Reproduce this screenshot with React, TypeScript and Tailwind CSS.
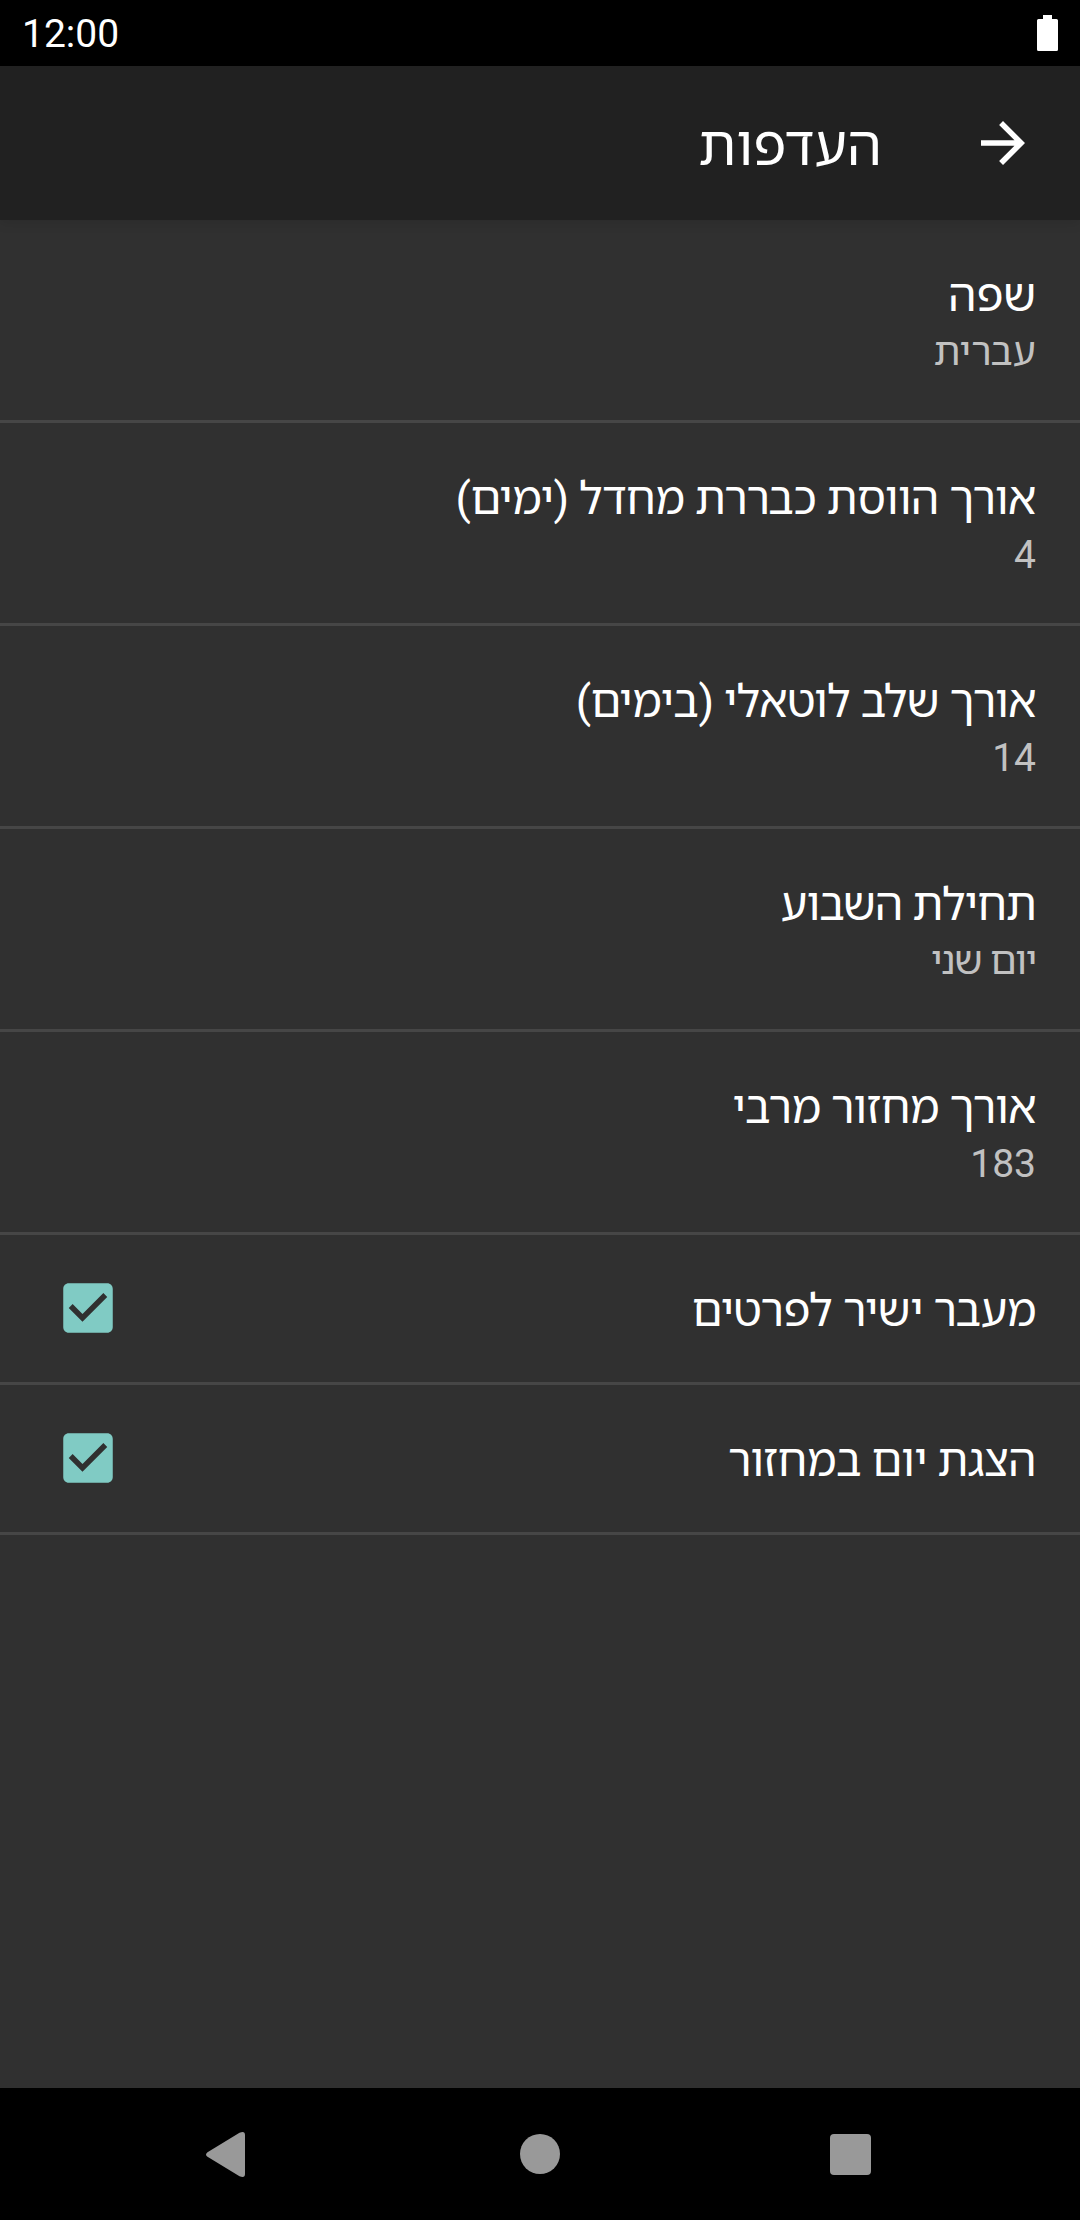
const rows = [
  { title: 'שפה', summary: 'עברית', titleTracking: 'tracking-normal', summaryTracking: 'tracking-normal' },
  { title: 'אורך הווסת כבררת מחדל (ימים)', summary: '4', titleTracking: 'tracking-[-0.55px]', summaryTracking: 'tracking-normal' },
  { title: 'אורך שלב לוטאלי (בימים)', summary: '14', titleTracking: 'tracking-[-0.62px]', summaryTracking: 'tracking-normal' },
  { title: 'תחילת השבוע', summary: 'יום שני', titleTracking: 'tracking-[-0.9px]', summaryTracking: 'tracking-[-1.2px]' },
  { title: 'אורך מחזור מרבי', summary: '183', titleTracking: 'tracking-[-0.6px]', summaryTracking: 'tracking-normal' },
];

const toggles = [
  { title: 'מעבר ישיר לפרטים', tracking: 'tracking-[-0.52px]' },
  { title: 'הצגת יום במחזור', tracking: 'tracking-[-0.6px]' },
];

function StatusBar() {
  return (
    <div dir="ltr" className="flex h-[66px] shrink-0 items-center justify-between bg-black px-[22px]">
      <span className="pt-[2px] text-[39px] leading-[64px]">12:00</span>
      <svg width="21" height="36" viewBox="0 0 21 36" fill="#fff">
        <path d="M6 0h9v4h4.500q1.500 0 1.500 1.500v29q0 1.500-1.500 1.500h-18q-1.500 0-1.500-1.500v-29q0-1.500 1.500-1.500H6z" />
      </svg>
    </div>
  );
}

function CheckBox() {
  return (
    <svg className="mb-px" width="66" height="66" viewBox="0 0 24 24" fill="#80cbc4">
      <path d="M19 3H5c-1.110 0-2 .9-2 2v14c0 1.100.890 2 2 2h14c1.110 0 2-.9 2-2V5c0-1.100-.890-2-2-2zm-9 14l-5-5 1.410-1.410L10 14.170l7.590-7.590L19 8l-9 9z" />
    </svg>
  );
}

function NavigationBar() {
  return (
    <nav dir="ltr" className="flex h-[132px] shrink-0 items-center bg-black pl-[206px] text-[#999]">
      <svg className="mt-px" width="39" height="45" viewBox="0 0 39 45" fill="currentColor">
        <path d="M1.500 20.200L33.500.800Q39-1.500 39 3v39q0 4.500-5.500 2.200L1.500 24.800q-3-2.300 0-4.600z" />
      </svg>
      <div className="ml-[275px] size-[40px] rounded-full bg-[#999]" />
      <div className="mt-px ml-[270px] size-[41px] rounded-[4px] bg-[#999]" />
    </nav>
  );
}

export default function App() {
  return (
    <div dir="rtl" className="flex h-[2220px] w-[1080px] flex-col overflow-hidden bg-[#303030] font-['Roboto','Noto_Sans_Hebrew',sans-serif] text-white">
      <StatusBar />
      <header className="relative flex h-[154px] shrink-0 items-center bg-[#212121] pr-[44px] shadow-[0_2px_12px_rgba(0,0,0,0.12)]">
        <svg width="66" height="66" viewBox="0 0 24 24" fill="#fff">
          <path d="M12 4l-1.410 1.410L16.170 11H4v2h12.170l-5.580 5.590L12 20l8-8z" />
        </svg>
        <h1 className="pt-[6px] pr-[88px] text-[55px] leading-[64px] tracking-[0.2px]">העדפות</h1>
      </header>
      <main className="flex-1">
        {rows.map((r) => (
          <div key={r.title} className="flex h-[203px] flex-col border-b-3 border-[#464646] px-[44px] pt-[46px]">
            <span className={`text-[45px] leading-[60px] ${r.titleTracking}`}>{r.title}</span>
            <span className={`text-[39px] leading-[52px] text-[#c1c1c1] ${r.summaryTracking}`}>{r.summary}</span>
          </div>
        ))}
        {toggles.map((t) => (
          <div key={t.title} className="flex h-[150px] items-center justify-between border-b-3 border-[#464646] pr-[44px] pl-[55px]">
            <span className={`pt-[4px] text-[45px] leading-[60px] ${t.tracking}`}>{t.title}</span>
            <CheckBox />
          </div>
        ))}
      </main>
      <NavigationBar />
    </div>
  );
}
